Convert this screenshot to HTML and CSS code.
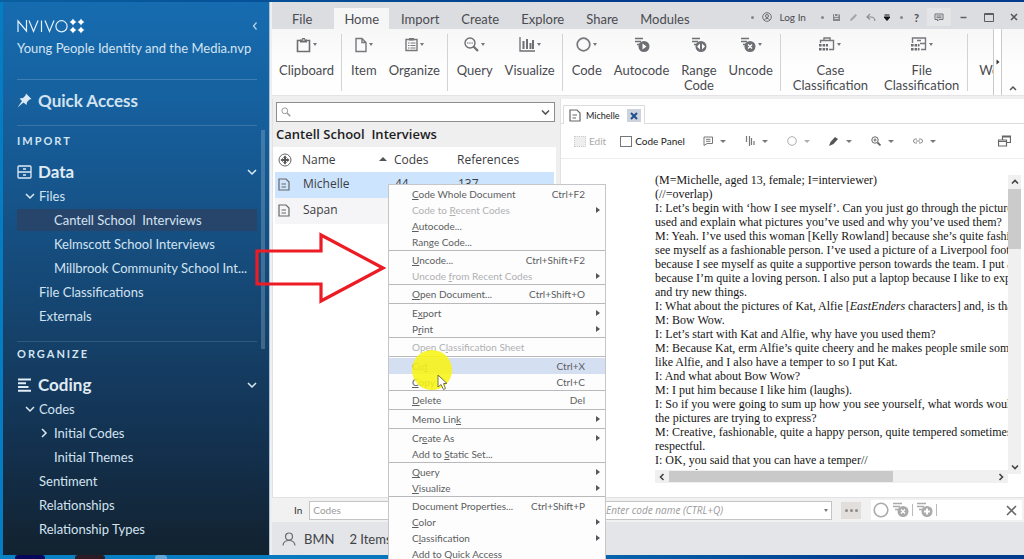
FILE: index.html
```html
<!DOCTYPE html>
<html lang="en">
<head>
<meta charset="utf-8">
<title>NVivo - Young People Identity and the Media</title>
<link rel="stylesheet" href="styles.css">
</head>
<body>
<div class="desktop">
  <div class="window">
    <nav class="sidebar">
      <header class="brand">
        <svg class="logo" width="68" height="16" viewBox="0 0 68 16" aria-label="NVIVO">
          <g fill="none" stroke="#e6f0f8" stroke-width="1.2">
            <path d="M1 14V3L9.500 13V2M12 2.500L16.500 13.500L21 2.500M24.500 2.500V14M28 2.500L32.500 13.500L37 2.500"/>
            <circle cx="44.500" cy="8.300" r="5.600"/>
          </g>
          <g fill="#fff">
            <path d="M56 0.500l1.200 2.300 2.300 1.200-2.300 1.200-1.200 2.300-1.200-2.300-2.300-1.200 2.300-1.200zM64 0.500l1.200 2.300 2.300 1.200-2.300 1.200-1.200 2.300-1.200-2.300-2.300-1.200 2.300-1.200zM56 8.500l1.200 2.300 2.300 1.200-2.300 1.200-1.200 2.300-1.200-2.300-2.300-1.200 2.300-1.200zM64 8.500l1.200 2.300 2.300 1.200-2.300 1.200-1.200 2.300-1.200-2.300-2.300-1.200 2.300-1.200z"/>
            <circle cx="56" cy="4" r="2"/><circle cx="64" cy="4" r="2"/><circle cx="56" cy="12" r="2"/><circle cx="64" cy="12" r="2"/>
          </g>
        </svg>
        <button class="plain" aria-label="Collapse navigation"><svg width="6" height="10" viewBox="0 0 6 10"><path d="M4.500 1.500L1.500 5L4.500 8.500" fill="none" stroke="#b5d2ea" stroke-width="1.300"/></svg></button>
      </header>
      <p class="project">Young People Identity and the Media.nvp</p>
      <a class="quick" href="#"><svg width="15" height="15" viewBox="0 0 15 15"><path d="M9 0.500L14.500 6L12.500 6.500L10 9L9.500 12L6.500 9.500L0.500 14.500L5 8L2.500 5.500L6 5L8.500 2.500Z" fill="#dceaf6"/></svg><span>Quick Access</span></a>
      <div class="tree">
        <h2 class="section">IMPORT</h2>
        <button class="heading">
          <svg width="15" height="14" viewBox="0 0 15 14"><g fill="none" stroke="#e0ecf6" stroke-width="1.300"><rect x="1" y="1" width="13" height="12" rx="1"/><path d="M1 7H14M6 4H9M6 10H9"/></g></svg>
          <span>Data</span>
          <svg class="end" width="10" height="8" viewBox="0 0 10 8"><path d="M1 2L5 6L9 2" fill="none" stroke="#dceaf6" stroke-width="1.500"/></svg>
        </button>
        <ul>
          <li><a class="l1" href="#"><svg width="10" height="8" viewBox="0 0 10 8"><path d="M1 2L5 6L9 2" fill="none" stroke="#dceaf6" stroke-width="1.500"/></svg>Files</a></li>
          <li><a class="l2 selected" href="#">Cantell School &nbsp;Interviews</a></li>
          <li><a class="l2" href="#">Kelmscott School Interviews</a></li>
          <li><a class="l2" href="#">Millbrook Community School Int...</a></li>
          <li><a class="l1b" href="#">File Classifications</a></li>
          <li><a class="l1b" href="#">Externals</a></li>
        </ul>
        <h2 class="section ruled">ORGANIZE</h2>
        <button class="heading">
          <svg width="15" height="14" viewBox="0 0 15 14"><path d="M1 1.500H14M1 5.300H9M1 9H11.500M1 12.700H14" stroke="#e0ecf6" stroke-width="2"/></svg>
          <span>Coding</span>
          <svg class="end" width="10" height="8" viewBox="0 0 10 8"><path d="M1 2L5 6L9 2" fill="none" stroke="#dceaf6" stroke-width="1.500"/></svg>
        </button>
        <ul>
          <li><a class="l1" href="#"><svg width="10" height="8" viewBox="0 0 10 8"><path d="M1 2L5 6L9 2" fill="none" stroke="#dceaf6" stroke-width="1.500"/></svg>Codes</a></li>
          <li><a class="l1c" href="#"><svg width="8" height="10" viewBox="0 0 8 10"><path d="M2 1L6 5L2 9" fill="none" stroke="#dceaf6" stroke-width="1.500"/></svg>Initial Codes</a></li>
          <li><a class="l2" href="#">Initial Themes</a></li>
          <li><a class="l1b" href="#">Sentiment</a></li>
          <li><a class="l1b" href="#">Relationships</a></li>
          <li><a class="l1b" href="#">Relationship Types</a></li>
        </ul>
        <span class="navthumb"></span>
      </div>
    </nav>

    <main class="main">
      <div class="titlebar">
        <div class="tabs" role="tablist">
          <button>File</button><button class="on">Home</button><button>Import</button><button>Create</button><button>Explore</button><button>Share</button><button>Modules</button>
        </div>
        <div class="tools">
          <i class="dot"></i>
          <button class="login"><svg width="10" height="10" viewBox="0 0 10 10"><g fill="none" stroke="#6b6d72"><circle cx="5" cy="5" r="4.300"/><circle cx="5" cy="4" r="1.500"/><path d="M2.200 8Q5 4.800 7.800 8"/></g></svg>Log In</button>
          <i class="dot"></i>
          <button aria-label="Save"><svg width="9" height="9" viewBox="0 0 9 9"><path d="M1 1H7L8 2V8H1Z" fill="#85878c"/><path d="M2.500 1V3.500H6V1M2.500 5.500H6.500" stroke="#d5d7da" fill="none"/></svg></button>
          <button aria-label="Edit"><svg width="9" height="9" viewBox="0 0 9 9"><path d="M1 8L1.500 6L6.500 1L8 2.500L3 7.500Z" fill="#a3a5a9"/></svg></button>
          <button aria-label="Undo"><svg width="10" height="9" viewBox="0 0 10 9"><path d="M4 1L1 4L4 6.500M1 4H5Q8.500 4 9 8" fill="none" stroke="#8d8f94" stroke-width="1.200"/></svg></button>
          <button class="more" aria-label="Customize"><svg width="6" height="7" viewBox="0 0 6 7"><path d="M0.500 1H5.500M0 3H6L3 6.500Z" stroke="#111" fill="#111"/></svg></button>
          <i class="dot"></i>
          <button class="help">?</button>
          <button class="chat" aria-label="Feedback"><svg width="10" height="9" viewBox="0 0 10 9"><path d="M1 1H9V6.500H5L3.500 8V6.500H1ZM2.500 3H7.500M2.500 4.700H7.500" fill="none" stroke="#6f7176"/></svg></button>
          <button class="win" aria-label="Minimize"><svg width="9" height="9" viewBox="0 0 9 9"><path d="M1.500 4.500H7.500" stroke="#5b6168" stroke-width="1.500"/></svg></button>
          <button class="win" aria-label="Maximize"><svg width="10" height="9" viewBox="0 0 10 9"><path d="M0.500 0.500H9.500V8.500H0.500ZM0 1.500H10" fill="none" stroke="#5b5d62"/></svg></button>
          <button class="win" aria-label="Close"><svg width="8" height="8" viewBox="0 0 8 8"><path d="M1 1L7 7M7 1L1 7" stroke="#55575c" stroke-width="1.600"/></svg></button>
        </div>
      </div>

      <div class="ribbon">
        <div class="rgroup">
          <button><span class="ico"><svg width="15" height="16" viewBox="0 0 15 16"><path d="M1.500 3.500H13.500V14.500H1.500Z" fill="none" stroke="#6e6f73" stroke-width="1.600"/><path d="M4 5.500V2.500H6V1H9V2.500H11V5.500Z" fill="#6e6f73"/><path d="M6.500 3H8.500" stroke="#fff"/></svg><b></b></span>Clipboard</button>
        </div>
        <div class="rgroup">
          <button><span class="ico"><svg width="12" height="16" viewBox="0 0 12 16"><path d="M1 1.500H7L11 5.500V14.500H1ZM7 1.500V5.500H11" fill="none" stroke="#77787c" stroke-width="1.400"/></svg><b></b></span>Item</button>
          <button><span class="ico"><svg width="13" height="15" viewBox="0 0 13 15"><path d="M1 2.500H12V13.500H1Z" fill="none" stroke="#77787c" stroke-width="1.400"/><path d="M4 1H9V3.500H4Z" fill="#77787c"/><path d="M3 6H4.500M5.500 6H10.500M3 8.500H4.500M5.500 8.500H10.500M3 11H4.500M5.500 11H10.500" stroke="#77787c"/></svg><b></b></span>Organize</button>
        </div>
        <div class="rgroup">
          <button><span class="ico"><svg width="15" height="15" viewBox="0 0 15 15"><g fill="none" stroke="#6e6f73"><circle cx="6" cy="6" r="5" stroke-width="1.400"/><path d="M3 6H9" stroke-width="1.200" stroke-dasharray="1.500 .7"/><path d="M9.500 9.500L14 14" stroke-width="2.200"/></g></svg><b></b></span>Query</button>
          <button><span class="ico"><svg width="16" height="15" viewBox="0 0 16 15"><path d="M1 0V14H16" fill="none" stroke="#6e6f73" stroke-width="1.300"/><path d="M4.500 4V12M8 2V12M11.500 6V12M14 3V12" stroke="#6e6f73" stroke-width="2"/></svg><b></b></span>Visualize</button>
        </div>
        <div class="rgroup">
          <button><span class="ico"><svg width="15" height="15" viewBox="0 0 15 15"><circle cx="7.500" cy="7.500" r="6.300" fill="none" stroke="#77787c" stroke-width="1.700"/></svg><b></b></span>Code</button>
          <button><span class="ico"><svg width="16" height="16" viewBox="0 0 16 16"><path d="M1 1.500H9M1 4.500H7M3 7.500H6" stroke="#6e6f73" stroke-width="1.400"/><circle cx="10" cy="9.500" r="5.500" fill="#6e6f73"/><path d="M8.500 6.500L12.500 9.500L8.500 12.500Z" fill="#fff"/></svg></span>Autocode</button>
          <button><span class="ico"><svg width="16" height="16" viewBox="0 0 16 16"><path d="M1 1.500H9M1 4.500H7M3 7.500H6" stroke="#6e6f73" stroke-width="1.400"/><circle cx="10" cy="9.500" r="5.500" fill="#6e6f73"/><path d="M9 6.500V12.500L6 9.500ZM11 6.500V12.500L14 9.500Z" fill="#fff"/></svg></span>Range<br>Code</button>
          <button><span class="ico"><svg width="16" height="16" viewBox="0 0 16 16"><path d="M1 1.500H9M1 4.500H7M3 7.500H6" stroke="#6e6f73" stroke-width="1.400"/><circle cx="10" cy="9.500" r="5.500" fill="#6e6f73"/><path d="M8 7.500L12 11.500M12 7.500L8 11.500" stroke="#fff" stroke-width="1.300"/></svg><b></b></span>Uncode</button>
        </div>
        <div class="rgroup wide">
          <button><span class="ico"><svg width="16" height="15" viewBox="0 0 16 15"><path d="M1.500 6V3.500H14.500V12.500H10M5 3V1H11V3" fill="none" stroke="#77787c" stroke-width="1.400"/><path d="M0 7h2.600v2.600H0zM3.600 7h2.600v2.600H3.600zM7 7h2v2.600H7zM0 11h2.600v2.600H0zM3.600 11h2.600v2.600H3.600zM7 11h2v2.600H7z" fill="#6e6f73"/></svg><b></b></span>Case<br>Classification</button>
          <button><span class="ico"><svg width="16" height="15" viewBox="0 0 16 15"><path d="M1.500 6V1H14.500V12.500H10M9 6.500H14M6 3.500H10" fill="none" stroke="#77787c" stroke-width="1.400"/><path d="M0 7h2.600v2.600H0zM3.600 7h2.600v2.600H3.600zM7 7h1.500v2.600H7zM0 11h2.600v2.600H0zM3.600 11h2.600v2.600H3.600zM7 11h1.500v2.600H7z" fill="#6e6f73"/></svg><b></b></span>File<br>Classification</button>
        </div>
        <div class="rgroup cut">
          <button><span class="ico"></span>Wo</button>
        </div>
        <button class="rscroll" aria-label="Scroll ribbon"><svg width="4" height="6" viewBox="0 0 4 6"><path d="M0.500 0.500L3.500 3L0.500 5.500Z" fill="#333"/></svg></button>
        <button class="rcollapse" aria-label="Collapse ribbon"><svg width="8" height="6" viewBox="0 0 8 6"><path d="M1 5L4 2L7 5" fill="none" stroke="#555" stroke-width="1.500"/></svg></button>
      </div>

      <div class="workspace">
        <section class="list">
          <div class="listhead">
            <div class="search">
              <svg width="10" height="10" viewBox="0 0 10 10"><g fill="none" stroke="#999"><circle cx="3.800" cy="3.800" r="2.900"/><path d="M6 6L9.300 9.300" stroke-width="1.500"/></g></svg>
              <input type="text" aria-label="Search project">
              <svg width="9" height="7" viewBox="0 0 9 7"><path d="M1 1.500L4.500 5L8 1.500" fill="none" stroke="#555" stroke-width="1.600"/></svg>
            </div>
            <h1>Cantell School &nbsp;Interviews</h1>
          </div>
          <table>
            <thead><tr>
              <th class="c0"><svg width="14" height="14" viewBox="0 0 14 14"><circle cx="7" cy="7" r="6" fill="none" stroke="#666"/><path d="M7 3.500V10.500M3.500 7H10.500" stroke="#555" stroke-width="2"/><path d="M7 2.500L9 5H5ZM7 11.500L5 9H9ZM2.500 7L5 5V9ZM11.500 7L9 9V5Z" fill="#555"/></svg></th>
              <th class="c1"><span>Name</span><i></i></th><th class="c2">Codes</th><th>References</th>
            </tr></thead>
            <tbody>
              <tr class="sel"><td><svg width="12" height="13" viewBox="0 0 12 13"><path d="M1 1H8L11 4V12H1ZM3.500 6H8M3.500 9H8" fill="none" stroke="#666" stroke-width="1.200"/></svg></td><td>Michelle</td><td>44</td><td>137</td></tr>
              <tr><td><svg width="12" height="13" viewBox="0 0 12 13"><path d="M1 1H8L11 4V12H1ZM3.500 6H8M3.500 9H8" fill="none" stroke="#666" stroke-width="1.200"/></svg></td><td>Sapan</td><td></td><td></td></tr>
            </tbody>
          </table>
        </section>

        <section class="doc">
          <div class="doctabs">
            <div class="doctab"><svg width="12" height="13" viewBox="0 0 12 13"><path d="M1 1H8L11 4V12H1ZM3.500 6H8M3.500 9H7" fill="none" stroke="#666" stroke-width="1.200"/></svg><span>Michelle</span><button aria-label="Close tab"><svg width="8" height="8" viewBox="0 0 8 8"><path d="M1 1L7 7M7 1L1 7" stroke="#1f4f8a" stroke-width="2"/></svg></button></div>
          </div>
          <div class="doctools">
            <label class="off"><input type="checkbox" disabled>Edit</label>
            <label class="panel"><input type="checkbox">Code Panel</label>
            <button aria-label="Annotations"><svg width="10" height="10" viewBox="0 0 10 10"><path d="M1 1H9.500V7.500H4L1 9.500ZM3 3.300H7.500M3 5.300H7.500" fill="none" stroke="#777"/></svg><b></b></button>
            <button aria-label="Coding stripes"><svg width="10" height="10" viewBox="0 0 10 10"><path d="M1.500 0V6M4.500 0V10M6.500 2V9M9 5V9" stroke="#777" stroke-width="1.200"/></svg><b></b></button>
            <button class="faint" aria-label="Highlight"><svg width="10" height="10" viewBox="0 0 10 10"><circle cx="5" cy="5" r="4.300" fill="none" stroke="#777"/></svg><b></b></button>
            <button aria-label="Highlighter"><svg width="10" height="10" viewBox="0 0 10 10"><path d="M0 10L1.500 6L6 1L9 3L4.500 8Z" fill="#555"/></svg><b></b></button>
            <button aria-label="Zoom"><svg width="10" height="10" viewBox="0 0 10 10"><g fill="none" stroke="#666"><circle cx="4" cy="4" r="3.200"/><path d="M2.500 4H5.500M4 2.500V5.500"/><path d="M6.500 6.500L9.500 9.500" stroke-width="1.800"/></g></svg><b></b></button>
            <button aria-label="Links"><svg width="10" height="10" viewBox="0 0 10 10"><path d="M4 3H2.500A2 2 0 0 0 2.500 7H4M6 3H7.500A2 2 0 0 1 7.500 7H6M3 5H7" fill="none" stroke="#888"/></svg><b></b></button>
            <button class="undock" aria-label="Undock"><svg width="13" height="12" viewBox="0 0 13 12"><path d="M4.500 5V1H12.500V7.500H9M4.500 2H12.500M0.500 5H8.500V11H0.500ZM0.500 6.500H8.500" fill="none" stroke="#666" stroke-width="1.200"/></svg></button>
          </div>
          <div class="page">
            <div class="viewer">
              <article>
                <p>(M=Michelle, aged 13, female; I=interviewer)</p>
                <p>(//=overlap)</p>
                <p>I: Let’s begin with ‘how I see myself’. Can you just go through the pictures<br>used and explain what pictures you’ve used and why you’ve used them?</p>
                <p>M: Yeah. I’ve used this woman [Kelly Rowland] because she’s quite fashic<br>see myself as a fashionable person. I’ve used a picture of a Liverpool footb<br>because I see myself as quite a supportive person towards the team. I put a<br>because I’m quite a loving person. I also put a laptop because I like to expl<br>and try new things.</p>
                <p>I: What about the pictures of Kat, Alfie [<em>EastEnders</em> characters] and, is that</p>
                <p>M: Bow Wow.</p>
                <p>I: Let’s start with Kat and Alfie, why have you used them?</p>
                <p>M: Because Kat, erm Alfie’s quite cheery and he makes people smile some<br>like Alfie, and I also have a temper to so I put Kat.</p>
                <p>I: And what about Bow Wow?</p>
                <p>M: I put him because I like him (laughs).</p>
                <p>I: So if you were going to sum up how you see yourself, what words would<br>the pictures are trying to express?</p>
                <p>M: Creative, fashionable, quite a happy person, quite tempered sometimes,<br>respectful.</p>
                <p>I: OK, you said that you can have a temper//</p>
                <p>M: //yeah//</p>
              </article>
              <div class="hbar"><svg width="6" height="8" viewBox="0 0 6 8"><path d="M4.500 1L1.500 4L4.500 7" fill="none" stroke="#444" stroke-width="1.600"/></svg><span><i></i></span><svg width="6" height="8" viewBox="0 0 6 8"><path d="M1.500 1L4.500 4L1.500 7" fill="none" stroke="#444" stroke-width="1.600"/></svg></div>
            </div>
            <div class="vbar"><svg width="8" height="6" viewBox="0 0 8 6"><path d="M1 4.500L4 1.500L7 4.500" fill="none" stroke="#444" stroke-width="1.600"/></svg><span><i></i></span><svg width="8" height="6" viewBox="0 0 8 6"><path d="M1 1.500L4 4.500L7 1.500" fill="none" stroke="#444" stroke-width="1.600"/></svg></div>
          </div>
        </section>
      </div>

      <div class="codebar">
        <label for="in">In</label>
        <input id="in" class="incodes" type="text" placeholder="Codes">
        <div class="combo"><input type="text" aria-label="Code name" placeholder="Enter code name (CTRL+Q)"><b></b></div>
        <button class="dots" aria-label="Select codes"><i></i><i></i><i></i></button>
        <div class="actions">
          <button aria-label="Code"><svg width="16" height="16" viewBox="0 0 16 16"><circle cx="8" cy="8" r="6.800" fill="none" stroke="#aaa" stroke-width="1.600"/></svg></button>
          <button aria-label="Uncode"><svg width="17" height="16" viewBox="0 0 17 16"><path d="M1 1.500H10M1 4.500H8M3 7.500H6" stroke="#aaa" stroke-width="1.400"/><circle cx="11" cy="9.500" r="5.500" fill="#aaa"/><path d="M9 7.500L13 11.500M13 7.500L9 11.500" stroke="#fff" stroke-width="1.300"/></svg></button>
          <hr>
          <button aria-label="Add code"><svg width="17" height="16" viewBox="0 0 17 16"><path d="M1 1.500H10M1 4.500H8M3 7.500H6" stroke="#aaa" stroke-width="1.400"/><circle cx="11" cy="9.500" r="5.500" fill="#aaa"/><path d="M11 6.500V12.500M8 9.500H14" stroke="#fff" stroke-width="2"/></svg></button>
          <hr>
          <button class="x" aria-label="Close code bar"><svg width="11" height="11" viewBox="0 0 11 11"><path d="M1 1L10 10M10 1L1 10" stroke="#666" stroke-width="1.600"/></svg></button>
        </div>
      </div>
      <footer class="status">
        <svg width="14" height="14" viewBox="0 0 14 14"><g fill="none" stroke="#6a6d72" stroke-width="1.200"><circle cx="7" cy="4.500" r="3.500"/><path d="M1 13.500Q1.500 8.500 7 8.500Q12.500 8.500 13 13.500"/></g></svg>
        <span>BMN</span><span>2 Items</span>
      </footer>
    </main>
  </div>
  <div class="taskbar"><i></i><i></i><i></i></div>

  <div class="menu" role="menu">
    <div class="mg">
      <button><span><u>C</u>ode Whole Document</span><kbd>Ctrl+F2</kbd></button>
      <button disabled class="sub"><span>Code to <u>R</u>ecent Codes</span></button>
      <button><span><u>A</u>utocode...</span></button>
      <button><span>Ran<u>g</u>e Code...</span></button>
    </div>
    <div class="mg">
      <button><span><u>U</u>ncode...</span><kbd>Ctrl+Shift+F2</kbd></button>
      <button disabled class="sub"><span>Uncode <u>f</u>rom Recent Codes</span></button>
    </div>
    <div class="mg one"><button><span><u>O</u>pen Document...</span><kbd>Ctrl+Shift+O</kbd></button></div>
    <div class="mg">
      <button class="sub"><span>E<u>x</u>port</span></button>
      <button class="sub"><span>P<u>r</u>int</span></button>
    </div>
    <div class="mg one"><button disabled><span>Open C<u>l</u>assification Sheet</span></button></div>
    <div class="mg">
      <button class="hover"><span>Cu<u>t</u></span><kbd>Ctrl+X</kbd></button>
      <button><span><u>C</u>opy</span><kbd>Ctrl+C</kbd></button>
    </div>
    <div class="mg one"><button><span><u>D</u>elete</span><kbd>Del</kbd></button></div>
    <div class="mg one"><button class="sub"><span>Memo Lin<u>k</u></span></button></div>
    <div class="mg">
      <button class="sub"><span>Cr<u>e</u>ate As</span></button>
      <button><span>Add to <u>S</u>tatic Set...</span></button>
    </div>
    <div class="mg">
      <button class="sub"><span><u>Q</u>uery</span></button>
      <button class="sub"><span><u>V</u>isualize</span></button>
    </div>
    <div class="mg">
      <button><span>Document Propert<u>i</u>es...</span><kbd>Ctrl+Shift+P</kbd></button>
      <button class="sub"><span><u>C</u>olor</span></button>
      <button class="sub"><span>C<u>l</u>assification</span></button>
      <button><span>Add to Quick Access</span></button>
    </div>
  </div>
  <svg class="arrow" width="132" height="76" viewBox="0 0 132 76"><path d="M3 21H67V5L129 38L67 71V54H3Z" fill="none" stroke="#ed1c24" stroke-width="3.200"/></svg>
  <span class="spot"></span>
  <svg class="cursor" width="12" height="17" viewBox="0 0 12 17"><path d="M1 1V13L4 10.500L6.500 15.500L8.500 14.500L6.500 9.500H10Z" fill="#fff" stroke="#77713a"/></svg>
</div>
</body>
</html>
```
FILE: styles.css
```css
* { box-sizing: border-box; }
body { margin: 0; font-family: Lato, "Liberation Sans", sans-serif; font-size: 13px; color: #4a4b50; }
button { border: 0; padding: 0; background: none; font: inherit; color: inherit; }
input { font: inherit; margin: 0; }
a { color: inherit; text-decoration: none; }
ul, h1, h2, p { margin: 0; padding: 0; list-style: none; font-weight: 400; }
svg { display: block; flex: none; }

.desktop { position: relative; display: flex; flex-direction: column; height: 100vh; min-height: 559px; overflow: hidden; padding-top: 2px; background: linear-gradient(90deg, #0a5f9f, #003c8c 60%); }
.window { flex: 1; display: flex; min-height: 0; }

/* Navigation */
.sidebar { width: 270px; flex: none; display: flex; flex-direction: column; border-left: 3px solid #057dc2; border-right: 1px solid #a8c4dc; padding: 16px 3px 0 14px; background: linear-gradient(#166cb0, #165c97 25%, #15436d 58%, #13314f 80%, #12222f); color: #d3e3f1; }
.brand { display: flex; justify-content: space-between; align-items: center; height: 16px; padding-right: 8px; }
.project { margin-right: 9px; padding: 4px 0 21px; height: 46px; line-height: 20px; border-bottom: 1px solid #3c7eb5; white-space: nowrap; }
.quick { display: flex; align-items: center; gap: 6px; height: 46px; margin-right: 9px; padding-bottom: 4px; border-bottom: 1px solid #3a75a8; font-size: 17px; font-weight: 700; }
.tree { position: relative; flex: 1; padding-right: 9px; }
.section { font-size: 11px; font-weight: 700; line-height: 14px; letter-spacing: 2px; padding-top: 8px; }
.ruled { margin-top: 14px; padding-top: 5px; border-top: 1px solid #2d5a80; }
.heading { display: flex; align-items: center; gap: 6px; width: 100%; height: 35px; padding: 12px 0 0; font-size: 17px; line-height: 20px; font-weight: 700; color: #e0ebf5; }
.heading .end { margin-left: auto; }
.tree li a { display: flex; align-items: center; height: 22px; margin: 2px 0; white-space: nowrap; }
.tree .l1 { padding-left: 8px; gap: 4px; }
.tree .l1b { padding-left: 22px; }
.tree .l1c { padding-left: 23px; gap: 6px; }
.tree .l2 { padding-left: 37px; }
.selected { background: #27456b; }
.navthumb { position: absolute; top: 4px; right: 1px; width: 4px; height: 219px; background: rgba(140, 180, 210, .35); }

/* Title bar */
.main { flex: 1; min-width: 0; display: flex; flex-direction: column; background: #efeff0; padding-left: 2px; }
.titlebar { display: flex; justify-content: space-between; height: 27px; padding: 6px 6px 0 10px; background: #dcdde0; }
.tabs { display: flex; }
.tabs button { padding: 0 10px; height: 21px; line-height: 20px; margin-right: 2px; }
.tabs button:first-child { margin-right: 12px; }
.tabs .on { background: #f6f6f7; }
.tools { display: flex; align-items: center; gap: 8px; height: 18px; font-size: 10px; }
.tools .login { display: flex; align-items: center; gap: 7px; margin-right: 7px; }
.dot { width: 3px; height: 3px; border-radius: 50%; background: #85878c; }
.more { margin-right: 2px; }
.help { font-weight: 700; font-size: 11px; margin-left: 3px; }
.chat { width: 24px; height: 18px; padding: 4px 7px; background: #e4e5e7; }
.win + .win { margin-left: 8px; }

/* Ribbon */
.ribbon { display: flex; height: 67px; background: linear-gradient(#f7f7f8, #fefefe 60%); border-bottom: 1px solid #e4e4e6; }
.rgroup { position: relative; display: flex; align-items: flex-start; gap: 12px; padding: 8px 8px 0 9px; line-height: 15px; }
.rgroup::after { content: ""; position: absolute; right: 0; top: 5px; bottom: 4px; width: 1px; background: #d2d3d5; }
.rgroup:first-child { padding-left: 7px; }
.ico { display: flex; justify-content: center; align-items: flex-start; gap: 2px; height: 26px; }
.ico b, .doctools b, .combo b { width: 0; border: 3px solid transparent; border-top-color: #77787c; border-bottom: 0; }
.ico b { margin-top: 6px; border-width: 3px 2px 0; }
.rgroup.wide { padding: 8px 9px 0 12px; gap: 16px; }
.rgroup.cut { flex: 1; overflow: hidden; padding: 8px 0 0 11px; min-width: 0; }
.cut::after { display: none; }
.rscroll { width: 9px; flex: none; background: #fff; border: 1px solid #c9cacc; border-width: 0 1px; padding: 0 2px; }
.rcollapse { width: 22px; flex: none; padding: 52px 7px 0; }

/* Source list */
.workspace { flex: 1; display: flex; min-height: 0; padding-top: 3px; }
.list { width: 284px; flex: none; background: #fff; border-left: 1px solid #e2e2e4; }
.listhead { background: #efeff0; padding: 3px 1px 0 3px; }
.search { display: flex; align-items: center; height: 20px; padding: 0 4px; border: 1px solid #8d8d90; background: #fff; }
.search input { flex: 1; min-width: 0; border: 0; background: none; }
.list h1 { font: 600 13px/25px "Open Sans", sans-serif; color: #1d1d1f; white-space: nowrap; }
.list table { width: 279px; margin-left: 2px; border-collapse: collapse; table-layout: fixed; font: 12px/24px "Open Sans", sans-serif; color: #3c3d42; }
.list th { text-align: left; font-weight: 400; height: 25px; padding: 0; }
.list td { height: 26px; padding: 0 0 2px 1px; }
.list td:first-child, .list .c0 { padding-left: 3px; }
.c0 { width: 27px; }
.c1 { width: 92px; }
.c1 i { float: right; margin: 9px 7px 0 0; border: 4px solid transparent; border-top: 0; border-bottom-color: #555; }
.c2 { width: 63px; }
.sel { background: #cce4fd; }
tbody tr + tr { background: #f5f5f7; }

/* Document */
.doc { flex: 1; min-width: 0; display: flex; flex-direction: column; margin-left: 4px; background: #fff; border-left: 1px solid #e2e2e4; }
.doctabs { display: flex; height: 25px; padding: 6px 0 0 2px; border-bottom: 1px solid #dcdcde; font-size: 9px; color: #222; }
.doctab { display: flex; align-items: center; height: 19px; gap: 5px; padding: 0 3px 0 5px; border: 1px solid #dcdcde; border-bottom: 0; background: #fff; }
.doctab button { width: 14px; height: 13px; margin-left: 2px; padding: 3px; background: #ccd3dc; }
.doctools { display: flex; align-items: center; height: 35px; padding: 0 13px 0 13px; border-bottom: 1px solid #ededee; font-size: 10px; color: #222; }
.doctools label { display: flex; align-items: center; gap: 3px; margin-right: 14px; white-space: nowrap; }
.doctools .panel { margin-right: 9px; }
.doctools input { appearance: none; width: 12px; height: 11px; border: 1px solid #777; background: #fff; }
.doctools .off { color: #aaa; }
.doctools .off input { border: 1px dotted #ccc; background: #eee; }
.doctools button { display: flex; align-items: center; gap: 7px; margin: 0 10px 0 9px; }
.doctools .faint { opacity: .6; }
.doctools .undock { margin: 0 0 0 auto; }
.page { flex: 1; display: flex; min-height: 0; padding: 14px 3px 14px 94px; }
.viewer { flex: 1; min-width: 0; display: flex; flex-direction: column; }
.viewer article { flex: 1; min-height: 0; overflow: hidden; font: 12px/14px "Liberation Serif", serif; color: #161616; white-space: nowrap; }
.vbar, .hbar { display: flex; align-items: center; background: #f0f0f0; flex: none; }
.vbar { flex-direction: column; width: 13px; padding: 4px 0; margin: 2px 0 9px; }
.vbar span { flex: 1; width: 13px; margin: 4px 0; }
.vbar i { display: block; height: 60px; background: #cbcbcb; }
.hbar { height: 13px; padding: 0 4px; }
.hbar span { flex: 1; height: 13px; margin: 0 4px; display: flex; align-items: center; }
.hbar i { height: 11px; width: 69%; background: #c9c9c9; }

/* Quick coding bar */
.codebar { display: flex; align-items: center; height: 25px; padding: 0 2px 0 22px; border-top: 1px solid #e2e2e4; font-size: 10px; color: #333; background: #f1f1f2; }
.codebar input { height: 19px; border: 1px solid #c4c4c6; background: #fff; padding: 0 3px; }
.codebar input::placeholder { color: #9a9a9c; }
.incodes { flex: 1; min-width: 0; margin: 0 46px 0 7px; }
.combo { position: relative; width: 230px; }
.combo input { width: 100%; font: italic 10px "Open Sans", sans-serif; }
.combo b { position: absolute; right: 4px; top: 8px; border-width: 3px 2px 0; }
.dots { display: flex; align-items: center; justify-content: center; gap: 2px; width: 20px; height: 17px; margin: 0 10px 0 9px; background: #e2dedb; }
.dots i { width: 3px; height: 3px; border-radius: 50%; background: #8d8a88; }
.actions { display: flex; align-items: center; gap: 3px; width: 151px; height: 20px; padding: 0 5px 0 2px; background: #fff; }
.actions hr { width: 1px; height: 12px; margin: 0; border: 0; background: #bbb; }
.actions .x { margin-left: auto; }

.status { display: flex; align-items: center; gap: 15px; height: 33px; padding-left: 10px; background: #e3e5e8; font-size: 13px; color: #3f4247; }
.status svg + span { margin-left: -7px; }
.taskbar { display: flex; height: 4px; padding-left: 15px; gap: 30px; background: linear-gradient(90deg, #0784c6, #0a72b8 50%, #003c8c 85%); }
.taskbar i { width: 30px; background: #06065c; border-radius: 3px 3px 0 0; }
.taskbar i + i { background: #2b1b26; }
.taskbar i + i + i { width: 12px; margin-left: 20px; background: #5fa6d6; }

/* Context menu */
.menu { position: absolute; left: 388px; top: 184px; width: 218px; padding: 1px 0; background: #fdfdfd; border: 1px solid #c6c6c8; font-size: 10px; line-height: 16px; color: #5c5d61; }
.mg + .mg { border-top: 1px solid #b9b9bb; padding-top: 1px; }
.one { padding-bottom: 1px; }
.menu button { display: flex; justify-content: space-between; width: 100%; height: 16px; padding: 0 20px 0 23px; }
.menu button:disabled { color: #b0b0b3; }
.menu kbd { font: inherit; }
.menu .hover { background: #d5dff2; }
.menu .sub { align-items: center; padding-right: 5px; }
.menu .sub::after { content: ""; border: 3px solid transparent; border-left: 4px solid #55565a; border-right: 0; }

/* Pointer and callouts */
.arrow { position: absolute; left: 254px; top: 230px; }
.spot { position: absolute; left: 412px; top: 350px; width: 40px; height: 40px; border-radius: 50%; background: rgba(247, 244, 20, .88); }
.cursor { position: absolute; left: 437px; top: 374px; }
```
